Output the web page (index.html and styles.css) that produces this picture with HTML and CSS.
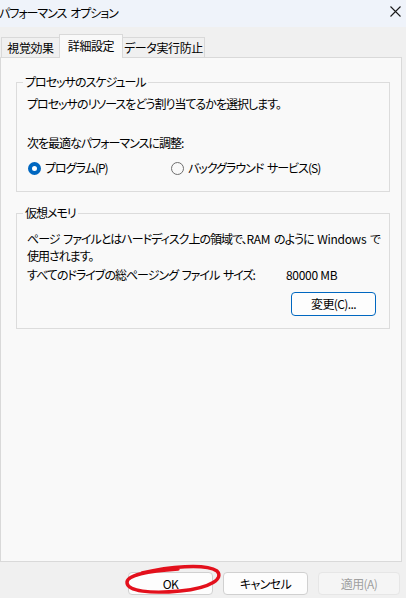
FILE: index.html
```html
<!DOCTYPE html>
<html lang="ja">
<head>
    <meta charset="UTF-8">
    <meta name="viewport" content="width=device-width, initial-scale=1.0">
    <title>パフォーマンス オプション</title>
    <link rel="stylesheet" href="styles.css">
</head>
<body>
    <div class="titlebar">
        <span class="title">パフォーマンス オプション</span>
        <svg class="close" width="11" height="11" viewBox="0 0 11 11">
            <path d="M0.5 0.5 L10.5 10.5 M10.5 0.5 L0.5 10.5" stroke="#1a1a1a" stroke-width="1.1" fill="none"/>
        </svg>
    </div>

    <div class="tabs">
        <div class="tab tab-1">視覚効果</div>
        <div class="tab tab-active">詳細設定</div>
        <div class="tab tab-3">データ実行防止</div>
    </div>

    <div class="panel">
        <fieldset class="group group-cpu">
            <legend>プロセッサのスケジュール</legend>
            <p class="line">プロセッサのリソースをどう割り当てるかを選択します。</p>
            <p class="line line-adjust">次を最適なパフォーマンスに調整:</p>
            <div class="radios">
                <label class="radio radio-first"><span class="dot checked"></span>プログラム(P)</label>
                <label class="radio"><span class="dot"></span>バックグラウンド サービス(S)</label>
            </div>
        </fieldset>

        <fieldset class="group group-mem">
            <legend>仮想メモリ</legend>
            <p class="desc">ページ ファイルとはハードディスク上の領域で、<span class="lat">RAM</span> のように <span class="lat">Windows</span> で<br>使用されます。</p>
            <div class="size-row">
                <span class="size-label">すべてのドライブの総ページング ファイル サイズ:</span>
                <span class="lat">80000 MB</span>
            </div>
            <div class="change-row">
                <button class="btn btn-change">変更(C)...</button>
            </div>
        </fieldset>
    </div>

    <div class="footer">
        <button class="btn">OK</button>
        <button class="btn">キャンセル</button>
        <button class="btn btn-disabled">適用(A)</button>
        <svg class="scribble" width="406" height="40" viewBox="0 560 406 40">
            <path d="M142 573 C168 567 205 563 217 571 C224 578 212 588 180 591 C150 594 128 591 127 583 C126 575 148 571 178 569"
                  stroke="#e3101c" stroke-width="3.4" fill="none" stroke-linecap="round"/>
        </svg>
    </div>
</body>
</html>
```

FILE: styles.css
```css
body {
    margin: 0;
    width: 406px;
    height: 598px;
    background-color: #f0f0f0;
    color: #000000;
    font-family: "Noto Sans CJK JP", "Noto Sans", sans-serif;
    font-feature-settings: "palt";
    font-size: 12px;
    line-height: 16px;
    letter-spacing: -1px;
    word-spacing: 2px;
    position: relative;
    overflow: hidden;
}

.lat {
    letter-spacing: -0.3px;
    word-spacing: 0;
}

.titlebar {
    height: 27px;
    background-color: #eff3fa;
    display: flex;
    justify-content: space-between;
    align-items: flex-start;
}

.title {
    padding-top: 5px;
    margin-left: -1px;
    white-space: nowrap;
}

.close {
    margin-top: 6px;
    margin-right: 5px;
}

.tabs {
    display: flex;
    align-items: flex-end;
    height: 30px;
    padding-left: 1px;
}

.tab {
    height: 19px;
    border: 1px solid #d9d9d9;
    border-bottom: none;
    background-color: #f0f0f0;
    display: flex;
    align-items: center;
    justify-content: center;
    white-space: nowrap;
    letter-spacing: -0.4px;
}

.tab-1 {
    width: 57px;
    border-right: none;
}

.tab-active {
    width: 62px;
    height: 22px;
    background-color: #f9f9f9;
    position: relative;
    top: 1px;
    padding-bottom: 1px;
}

.tab-3 {
    width: 81px;
    border-left: none;
}

.panel {
    width: 400px;
    height: 487px;
    border: 1px solid #d9d9d9;
    background-color: #f9f9f9;
    padding-top: 16px;
}

.group {
    margin: 0 11px 0 15px;
    border: 1px solid #dcdcdc;
    padding: 6px 13px 15px 10px;
    min-width: 0;
}

.group legend {
    padding: 0 2px;
    margin-left: -4px;
    line-height: 16px;
}

.line {
    margin: 0;
}

.line-adjust {
    margin-top: 23px;
}

.radios {
    display: flex;
    margin-top: 9px;
}

.radio {
    display: flex;
    align-items: center;
    padding-left: 1px;
    white-space: nowrap;
}

.radio-first {
    width: 142px;
}

.dot {
    width: 11px;
    height: 11px;
    border: 1px solid #6e6e6e;
    border-radius: 50%;
    margin-right: 4px;
    box-sizing: content-box;
}

.dot.checked {
    width: 5px;
    height: 5px;
    border: 4px solid #0067c0;
    background-color: #ffffff;
}

.group-mem {
    margin-top: 13px;
    padding-top: 9px;
    padding-bottom: 12px;
}

.desc {
    margin: 0;
    height: 34px;
    line-height: 17px;
    white-space: nowrap;
}

.size-row {
    display: flex;
    height: 16px;
    margin-top: 3px;
    white-space: nowrap;
}

.size-label {
    width: 259px;
}

.change-row {
    display: flex;
    justify-content: flex-end;
    height: 24px;
    margin-top: 9px;
}

.btn {
    font-family: "Noto Sans CJK JP", "Noto Sans", sans-serif;
    font-feature-settings: "palt";
    font-size: 12px;
    line-height: 16px;
    letter-spacing: -0.6px;
    color: #000000;
    background-color: #fdfdfd;
    border: 1px solid #d0d0d0;
    border-radius: 4px;
    width: 85px;
    height: 23px;
    margin: 0;
    padding: 0;
}

.btn-change {
    height: 24px;
    border-color: #0067c0;
}

.footer {
    display: flex;
    justify-content: flex-end;
    gap: 10px;
    padding-top: 10px;
    padding-right: 6px;
}

.btn-disabled {
    width: 82px;
    color: #a0a0a0;
    background-color: #f5f5f5;
    border-color: #e6e6e6;
}

.scribble {
    position: absolute;
    left: 0;
    top: 560px;
}
```
